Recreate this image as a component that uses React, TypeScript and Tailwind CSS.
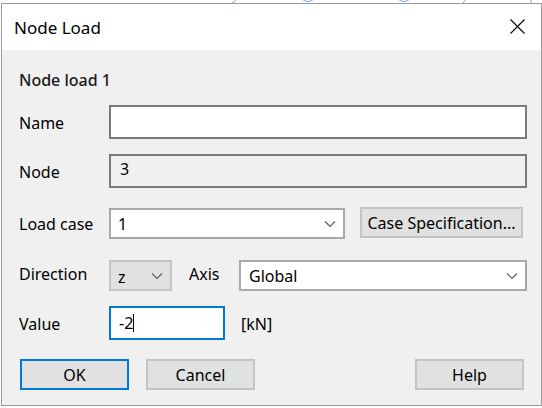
import React from 'react';

const font = { fontFamily: '"Noto Sans", "Open Sans", sans-serif' };

const Chevron = () => (
  <svg width="12" height="8" viewBox="0 0 12 8" className="shrink-0">
    <path d="M1 1.5 L6 6.5 L11 1.5" fill="none" stroke="#5f5f5f" strokeWidth="1.2" />
  </svg>
);

const Label = ({ children, className = '' }: { children: React.ReactNode; className?: string }) => (
  <div className={`w-[90px] shrink-0 pt-[2px] text-[16px] text-black ${className}`}>{children}</div>
);

const DlgButton = ({ children, primary, className = '' }: { children: React.ReactNode; primary?: boolean; className?: string }) => (
  <button
    type="button"
    className={`h-[31px] w-[109px] flex items-center justify-center text-[16px] text-black bg-[#e1e1e1] ${primary ? 'border-2 border-[#0078d7]' : 'border-2 border-[#c4c4c4]'} ${className}`}
  >
    {children}
  </button>
);

export default function App() {
  return (
    <div className="w-[542px] h-[408px] bg-white overflow-hidden relative" style={font}>
      {/* window behind the dialog */}
      <svg className="absolute left-0 top-0" width="542" height="4" viewBox="0 0 542 4">
        <path d="M238 -2 Q235 2 232 3" fill="none" stroke="#7aa6e8" strokeWidth="1" />
        <path d="M302 -1 Q308 4 314 -1" fill="none" stroke="#7aa6e8" strokeWidth="1" />
        <path d="M398 -1 Q404 4 410 -1" fill="none" stroke="#7aa6e8" strokeWidth="1" />
        <path d="M466 -2 Q465 1 463 3" fill="none" stroke="#7aa6e8" strokeWidth="1" />
        <path d="M531 0 L531 3" fill="none" stroke="#7aa6e8" strokeWidth="1" />
      </svg>

      <div className="mt-[3px] ml-px w-[541px] h-[403px] border border-[#9a9a9a] bg-[#f0f0f0] flex flex-col">
        {/* title bar */}
        <div className="h-[46px] bg-white flex items-center justify-between pl-[12px] pr-[16px] shrink-0">
          <span className="text-[17px] text-black mt-px">Node Load</span>
          <svg width="15" height="15" viewBox="0 0 15 15" className="-mt-[2px]">
            <path d="M0.5 0.5 L14.5 14.5 M14.5 0.5 L0.5 14.5" stroke="#000" strokeWidth="1.1" />
          </svg>
        </div>

        <div className="flex flex-col pl-[17px] pr-[14px]">
          <div className="mt-[20px] h-[20px] leading-[20px] text-[16px] font-medium text-[#1a1a1a]">Node load 1</div>

          {/* Name */}
          <div className="mt-[15px] flex items-center">
            <Label>Name</Label>
            <div className="h-[34px] flex-1 bg-white border-2 border-[#7a7a7a]" />
          </div>

          {/* Node */}
          <div className="mt-[15px] flex items-center">
            <Label>Node</Label>
            <div className="h-[34px] flex-1 bg-[#f0f0f0] border-2 border-[#7a7a7a] flex items-center pl-[9px] text-[16px] text-black">
              <span className="-mt-[5px]">3</span>
            </div>
          </div>

          {/* Load case */}
          <div className="mt-[19px] flex items-start">
            <Label className="h-[32px] flex items-center">Load case</Label>
            <div className="mt-px h-[31px] w-[236px] bg-white border-2 border-[#a9a9a9] flex items-center justify-between pl-[7px] pr-[7px] text-[16px] text-black">
              <span>1</span>
              <Chevron />
            </div>
            <button
              type="button"
              className="ml-[15px] h-[31px] w-[163px] bg-[#e1e1e1] border-2 border-[#c4c4c4] flex items-center justify-center text-[16px] text-black whitespace-nowrap"
            >
              Case Specification...
            </button>
          </div>

          {/* Direction / Axis */}
          <div className="mt-[21px] flex items-start">
            <Label className="h-[25px] flex items-center">Direction</Label>
            <div className="h-[31px] w-[63px] bg-[#e1e1e1] border-2 border-[#c4c4c4] flex items-center justify-between pl-[7px] pr-[7px] text-[16px] text-black">
              <span className="mt-[2px]">z</span>
              <Chevron />
            </div>
            <div className="ml-[17px] w-[50px] h-[25px] pt-[2px] flex items-center text-[16px] text-black">Axis</div>
            <div className="h-[31px] flex-1 bg-white border-2 border-[#a9a9a9] flex items-center justify-between pl-[8px] pr-[7px] text-[16px] text-black">
              <span>Global</span>
              <Chevron />
            </div>
          </div>

          {/* Value */}
          <div className="mt-[15px] flex items-center">
            <Label>Value</Label>
            <div className="h-[34px] w-[116px] bg-white border-2 border-[#0078d7] flex items-center pl-[8px] text-[16px] text-black">
              <span>-2</span>
              <span className="w-px h-[18px] bg-black" />
            </div>
            <span className="ml-[16px] pt-[2px] text-[16px] text-black">[kN]</span>
          </div>

          {/* buttons */}
          <div className="mt-[19px] flex items-center pl-[1px] pr-[3px]">
            <DlgButton primary>OK</DlgButton>
            <DlgButton className="ml-[17px]">Cancel</DlgButton>
            <div className="flex-1" />
            <DlgButton>Help</DlgButton>
          </div>
        </div>
      </div>
    </div>
  );
}
